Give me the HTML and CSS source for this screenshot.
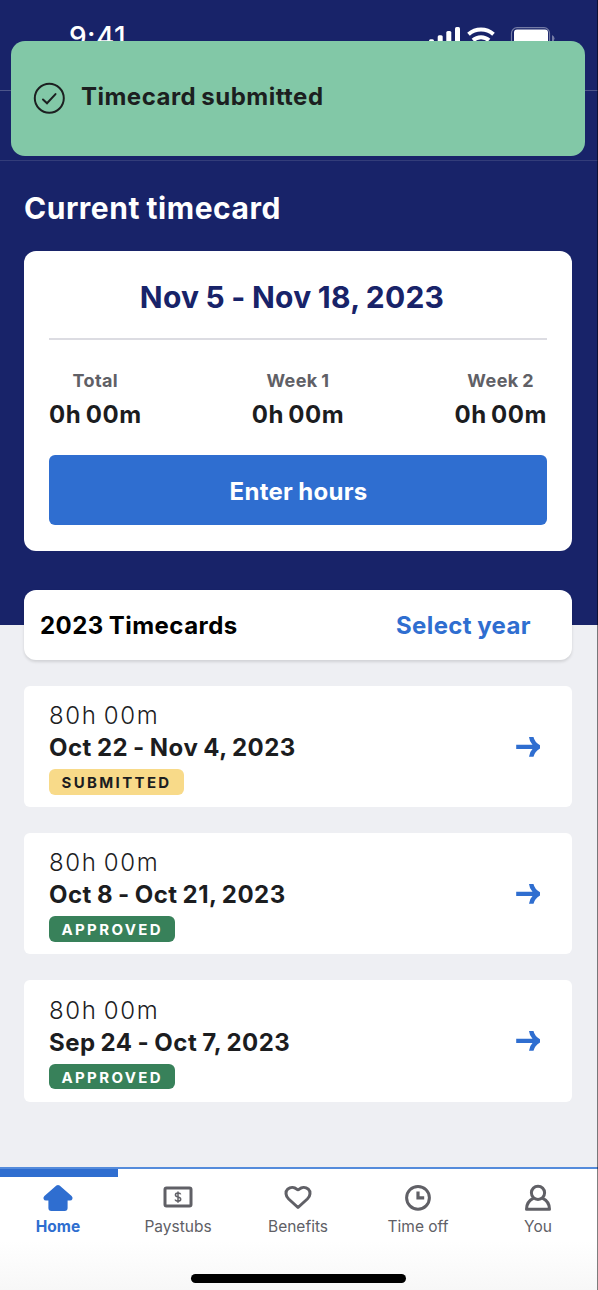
FILE: index.html
```html
<!DOCTYPE html>
<html lang="en">
<head>
<meta charset="utf-8">
<title>Timecards</title>
<link rel="stylesheet" href="styles.css">
</head>
<body>
<div class="screen">
  <header class="status-bar">
    <span class="clock">9:41</span>
    <svg class="status-icons" width="128" height="26" viewBox="0 0 128 26">
      <g fill="#fff">
        <rect x="1" y="12.300" width="5" height="8" rx="1.500"/>
        <rect x="9.700" y="8.300" width="5" height="12" rx="1.500"/>
        <rect x="18.300" y="4" width="5" height="16" rx="1.500"/>
        <rect x="27" y="0" width="5" height="20" rx="1.500"/>
      </g>
      <g fill="none" stroke="#fff" stroke-width="4">
        <path d="M40.500 7.300a19 19 0 0 1 25 0"/>
        <path d="M45 13.300a12 12 0 0 1 16 0"/>
      </g>
      <rect x="83.500" y=".7" width="38" height="22" rx="5.500" fill="none" stroke="#747ba5" stroke-width="1.200"/>
      <rect x="86" y="2.500" width="34" height="18" rx="3" fill="#fff"/>
      <path d="M124 8q2.500 1 2.500 3.500t-2.500 3.500z" fill="#747ba5"/>
    </svg>
  </header>
  <div class="nav-strip"></div>

  <main class="content">
    <h1 class="heading">Current timecard</h1>
    <section class="current">
      <h2 class="period">Nov 5 - Nov 18, 2023</h2>
      <div class="totals">
        <div class="total"><span class="total-label">Total</span><span class="total-value">0h 00m</span></div>
        <div class="total"><span class="total-label">Week 1</span><span class="total-value">0h 00m</span></div>
        <div class="total"><span class="total-label">Week 2</span><span class="total-value">0h 00m</span></div>
      </div>
      <button class="enter">Enter hours</button>
    </section>

    <section class="year-bar">
      <h2 class="year-title">2023 Timecards</h2>
      <a class="year-link">Select year</a>
    </section>

    <div class="cards">
      <article class="card">
        <div class="card-body">
          <span class="hours">80h 00m</span>
          <span class="dates">Oct 22 - Nov 4, 2023</span>
          <span class="badge badge-submitted">SUBMITTED</span>
        </div>
        <svg class="arrow" width="26" height="24" viewBox="0 0 26 24"><path d="M14 2H18.500Q19.500 7 25 10.300V13.500Q19.500 17 18.500 21.700H14Q14.500 17 17.500 14.100H1.200V9.700H17.500Q14.500 7 14 2z"/></svg>
      </article>
      <article class="card">
        <div class="card-body">
          <span class="hours">80h 00m</span>
          <span class="dates">Oct 8 - Oct 21, 2023</span>
          <span class="badge badge-approved">APPROVED</span>
        </div>
        <svg class="arrow" width="26" height="24" viewBox="0 0 26 24"><path d="M14 2H18.500Q19.500 7 25 10.300V13.500Q19.500 17 18.500 21.700H14Q14.500 17 17.500 14.100H1.200V9.700H17.500Q14.500 7 14 2z"/></svg>
      </article>
      <article class="card">
        <div class="card-body">
          <span class="hours">80h 00m</span>
          <span class="dates">Sep 24 - Oct 7, 2023</span>
          <span class="badge badge-approved">APPROVED</span>
        </div>
        <svg class="arrow" width="26" height="24" viewBox="0 0 26 24"><path d="M14 2H18.500Q19.500 7 25 10.300V13.500Q19.500 17 18.500 21.700H14Q14.500 17 17.500 14.100H1.200V9.700H17.500Q14.500 7 14 2z"/></svg>
      </article>
    </div>
  </main>

  <nav class="tabs">
    <div class="tab-row">
      <a class="tab tab-active">
        <svg width="30" height="28" viewBox="0 0 30 28"><path fill="#2f6ed0" d="M13.400 1.600q1.600-1.400 3.200 0L28.600 12q1.400 1.500.8 3-.6 1.500-2.400 1.500h-2.400V24q0 2.900-2.900 2.900H8.300q-2.900 0-2.900-2.900v-7.500H3Q1.200 16.500.6 15q-.6-1.500.8-3z"/></svg>
        <span class="tab-label">Home</span>
      </a>
      <a class="tab">
        <svg width="30" height="28" viewBox="0 0 30 28"><rect x="2" y="4" width="26" height="18" rx="1.500" fill="none" stroke="#606066" stroke-width="3"/><path d="M17.700 10.400Q17.300 9 15 9T12.400 10.800Q12.400 12.500 15 13T17.700 15.200Q17.700 17.100 15 17.100T12.300 15.500M15 7.500V18.700" fill="none" stroke="#606066" stroke-width="1.500"/></svg>
        <span class="tab-label">Paystubs</span>
      </a>
      <a class="tab">
        <svg width="30" height="28" viewBox="0 0 30 28"><path d="M15 23.500 5.700 15C2.400 11.800 2.200 7.500 4.700 5.200 7.800 2.500 11.500 3.300 13.700 5.200Q15 6.300 16.300 5.200C18.500 3.300 22.200 2.500 25.300 5.200 27.800 7.500 27.600 11.800 24.300 15z" fill="none" stroke="#606066" stroke-width="3" stroke-linejoin="round"/></svg>
        <span class="tab-label">Benefits</span>
      </a>
      <a class="tab">
        <svg width="30" height="28" viewBox="0 0 30 28"><circle cx="15" cy="13.800" r="11.400" fill="none" stroke="#606066" stroke-width="3"/><path d="M15 7.500v6.300h6.200" fill="none" stroke="#606066" stroke-width="3.200"/></svg>
        <span class="tab-label">Time off</span>
      </a>
      <a class="tab">
        <svg width="30" height="28" viewBox="0 0 30 28" fill="none" stroke="#606066" stroke-width="3"><circle cx="15" cy="8.800" r="6.600"/><path d="M10.600 14.200Q3.600 17.500 3.500 25.200H26.500Q26.400 17.500 19.400 14.200" stroke-linejoin="round"/></svg>
        <span class="tab-label">You</span>
      </a>
    </div>
    <div class="home-area"><div class="home-indicator"></div></div>
  </nav>

  <div class="toast">
    <svg class="toast-icon" width="32" height="32" viewBox="0 0 32 32" fill="none" stroke="#1c1f20" stroke-width="2"><circle cx="16.300" cy="16.300" r="14.500"/><path d="m10 17.500 4 3.800 8.500-9.200" stroke-linecap="round"/></svg>
    <span class="toast-text">Timecard submitted</span>
  </div>
  <div class="edge"></div>
</div>
</body>
</html>
```
FILE: styles.css
```css
* { box-sizing: border-box; }
body { margin: 0; font-family: Inter, "Liberation Sans", sans-serif; color: #1c1d1f; }
h1, h2 { margin: 0; }
.screen { position: relative; width: 598px; height: 1290px; overflow: hidden; display: flex; flex-direction: column; background: linear-gradient(#182369 625px, #eeeff3 625px); }
.status-bar { height: 91px; border-bottom: 1px solid #4d568b; padding: 20px 44px 0 69px; display: flex; justify-content: space-between; align-items: flex-start; }
.clock { color: #fff; font-size: 28px; line-height: 34px; font-weight: 500; letter-spacing: .4px; }
.status-icons { margin: 7px -2px 0 0; }
.nav-strip { height: 70px; border-bottom: 1px solid #333d7a; }
.content { flex: 1; padding: 28px 26px 0 24px; }
.heading { color: #fff; font-size: 30px; line-height: 38px; font-weight: 700; letter-spacing: .52px; word-spacing: -1px; }
.current { height: 300px; margin-top: 24px; padding: 26px 25px; border-radius: 12px; background: #fff; display: flex; flex-direction: column; }
.period { height: 63px; padding-right: 12px; border-bottom: 2px solid #dcdce2; color: #182369; text-align: center; font-size: 30px; line-height: 40px; font-weight: 700; letter-spacing: .25px; word-spacing: -1px; }
.totals { display: flex; justify-content: space-between; padding-top: 29px; }
.total { display: flex; flex-direction: column; align-items: center; }
.total-label { font-size: 18px; line-height: 24px; font-weight: 700; color: #606066; letter-spacing: .4px; word-spacing: -1px; }
.total-value { font-size: 24px; line-height: 32px; margin-top: 6px; font-weight: 700; letter-spacing: .55px; word-spacing: -1.800px; }
.enter { height: 70px; margin-top: 24px; padding: 4px 0 0 1px; border: 0; border-radius: 6px; background: #2f6ed0; color: #fff; font: 700 24px/32px Inter, "Liberation Sans", sans-serif; letter-spacing: .3px; word-spacing: -1px; }
.year-bar { height: 70px; margin-top: 39px; padding: 2px 41px 0 16px; border-radius: 12px; background: #fff; box-shadow: 0 2px 3px rgba(0,0,0,.12); display: flex; justify-content: space-between; align-items: center; }
.year-title { font-size: 24px; line-height: 32px; font-weight: 700; color: #000; letter-spacing: .45px; word-spacing: -1px; }
.year-link { font-size: 24px; line-height: 32px; font-weight: 700; color: #2f6ed0; letter-spacing: .4px; word-spacing: -1px; }
.cards { display: flex; flex-direction: column; gap: 26px; margin-top: 25.700px; }
.card { height: 121.300px; padding: 14px 31px 12px 25px; border-radius: 6px; background: #fff; display: flex; justify-content: space-between; align-items: center; }
.card-body { display: flex; flex-direction: column; align-items: flex-start; }
.hours { font-size: 24px; line-height: 32px; font-weight: 300; letter-spacing: 1.600px; word-spacing: -2px; }
.dates { font-size: 24px; line-height: 32px; font-weight: 700; letter-spacing: .5px; word-spacing: -1.200px; }
.badge { height: 25.500px; margin-top: 5px; padding: 0 12.500px; border-radius: 6px; font-size: 15px; line-height: 27px; font-weight: 700; letter-spacing: 2.350px; }
.badge-submitted { background: #f8da89; }
.badge-approved { background: #38815a; color: #fff; }
.arrow { fill: #2f6ed0; margin-top: -1px; }
.tabs { height: 123px; border-top: 2px solid #548bdb; background: #fff; }
.tab-row { height: 72px; display: grid; grid-template-columns: 118px repeat(4, 120px); }
.tab { display: flex; flex-direction: column; align-items: center; padding: 15px 0 0; color: #606066; border-top: 0 solid #2f6ed0; }
.tab-active { color: #2f6ed0; font-weight: 700; padding: 7px 2px 0 0; border-top-width: 8px; }
.tab-label { font-size: 15.500px; line-height: 22px; margin-top: 4px; }
.home-area { height: 49px; padding-top: 33px; background: linear-gradient(#fff, #f7f7f7); }
.home-indicator { width: 215px; height: 9px; margin: 0 auto 0 191.400px; border-radius: 5px; background: #000; }
.toast { position: absolute; left: 11px; top: 41px; width: 574px; height: 115px; padding: 0 22px; border-radius: 14px; background: #82c8a7; display: flex; align-items: center; gap: 16px; }
.toast-icon { margin-top: -1px; }
.toast-text { font-size: 24px; line-height: 32px; font-weight: 700; margin-top: -4px; color: #1c1f20; letter-spacing: .48px; word-spacing: -1px; }
.edge { position: absolute; right: 0; top: 0; width: 1px; height: 100%; background: rgba(0,0,0,.5); }
```
